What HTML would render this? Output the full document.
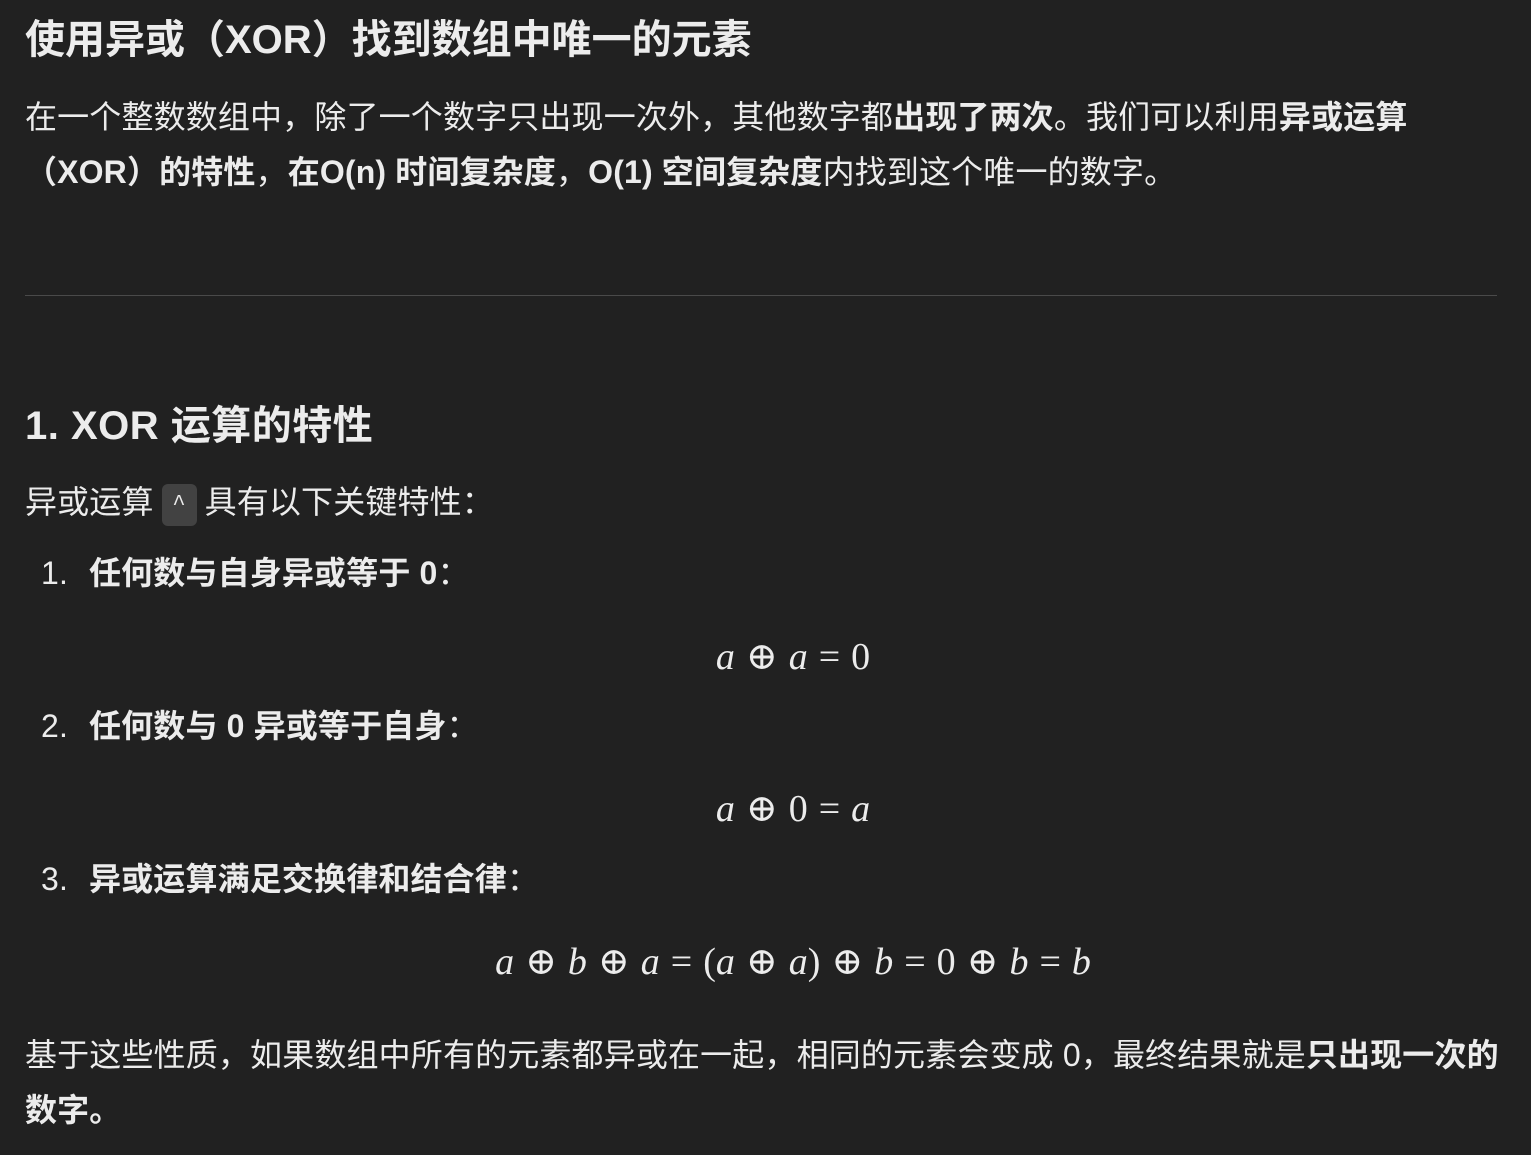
<!DOCTYPE html>
<html><head><meta charset="utf-8"><style>
html,body{margin:0;padding:0;background:#212121;width:1531px;height:1155px;overflow:hidden}
body{color:#ececec;font-family:"Liberation Sans","Noto Sans CJK SC",sans-serif;font-size:32px;position:relative}
.l{position:absolute;left:25px;height:56px;line-height:56px;white-space:nowrap}
b{font-weight:700}
.h1{font-size:40px;font-weight:700;letter-spacing:0px}
.h2{font-size:40px;font-weight:700;letter-spacing:0.5px}
.m{position:absolute;left:0;width:1586px;text-align:center;height:56px;line-height:56px;font-family:"Liberation Serif","DejaVu Serif",serif;font-size:38px;white-space:nowrap}
.m i{font-style:italic}
.o{display:inline-block;margin:0 11px}
.code{display:inline-block;background:#424242;border-radius:6px;font-size:22px;width:35px;text-align:center;height:42px;line-height:42px;vertical-align:middle;margin:0 8px;font-family:"Liberation Mono",monospace}
hr{position:absolute;left:25px;top:295px;width:1472px;margin:0;border:0;border-top:1px solid #4a4a4a}
.n{display:inline-block;width:64px;text-align:left;padding-left:16px;box-sizing:border-box}
.w{letter-spacing:0.15px}
</style></head><body>
<div class="l h1" style="top:12px">使用异或（XOR）找到数组中唯一的元素</div>
<div class="l w" style="top:89px">在一个整数数组中，除了一个数字只出现一次外，其他数字都<b>出现了两次</b>。我们可以利用<b>异或运算</b></div>
<div class="l w" style="top:144px"><b>（XOR）的特性</b>，<b>在O(n) 时间复杂度</b>，<b>O(1) 空间复杂度</b>内找到这个唯一的数字。</div>
<hr>
<div class="l h2" style="top:398px">1. XOR 运算的特性</div>
<div class="l w" style="top:474px">异或运算<span class="code">^</span>具有以下关键特性：</div>
<div class="l w" style="top:545px"><span class="n">1.</span><b>任何数与自身异或等于 0</b>：</div>
<div class="m" style="top:629px"><i>a</i><span class="o">⊕</span><i>a</i><span class="o">=</span>0</div>
<div class="l w" style="top:698px"><span class="n">2.</span><b>任何数与 0 异或等于自身</b>：</div>
<div class="m" style="top:781px"><i>a</i><span class="o">⊕</span>0<span class="o">=</span><i>a</i></div>
<div class="l w" style="top:851px"><span class="n">3.</span><b>异或运算满足交换律和结合律</b>：</div>
<div class="m" style="top:934px"><i>a</i><span class="o">⊕</span><i>b</i><span class="o">⊕</span><i>a</i><span class="o">=</span>(<i>a</i><span class="o">⊕</span><i>a</i>)<span class="o">⊕</span><i>b</i><span class="o">=</span>0<span class="o">⊕</span><i>b</i><span class="o">=</span><i>b</i></div>
<div class="l w" style="top:1027px">基于这些性质，如果数组中所有的元素都异或在一起，相同的元素会变成 0，最终结果就是<b>只出现一次的</b></div>
<div class="l w" style="top:1082px"><b>数字。</b></div>
</body></html>
